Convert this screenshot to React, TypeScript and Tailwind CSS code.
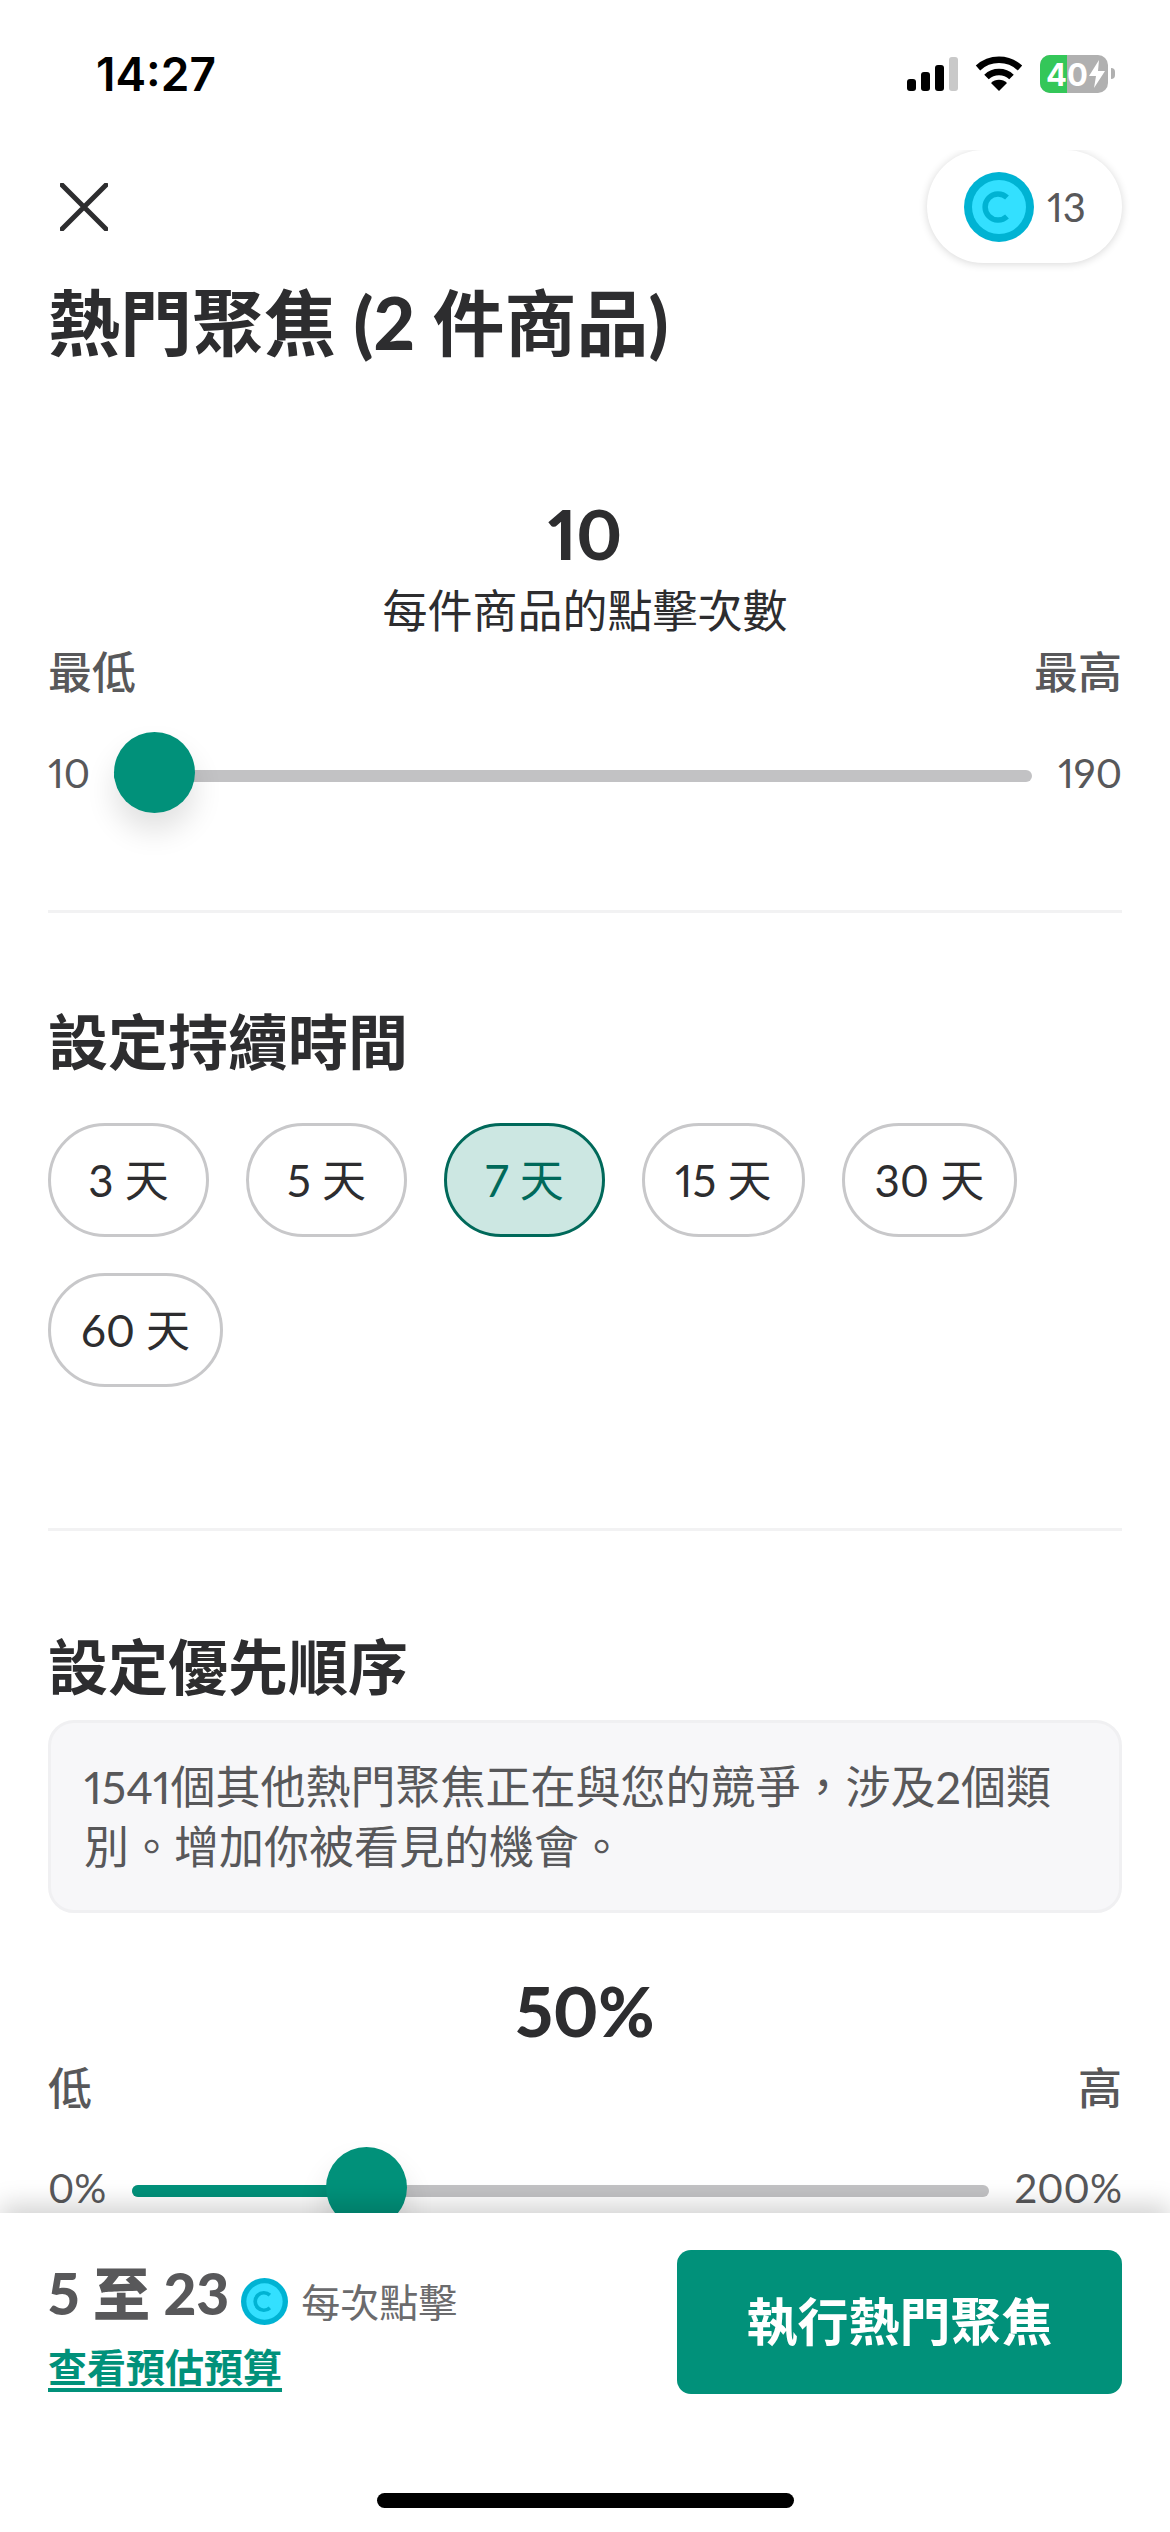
import React from 'react';

const durations = ['3 天', '5 天', '7 天', '15 天', '30 天', '60 天'];

const CoinIcon: React.FC<{ size: number }> = ({ size }) => (
  <svg width={size} height={size} viewBox="0 0 70 70" className="shrink-0">
    <circle cx="35" cy="35" r="35" fill="#00b3d3" />
    <circle cx="35" cy="35" r="27" fill="#33e0ff" />
    <path d="M43 25.5 A13 13 0 1 0 43 44.5" fill="none" stroke="#00b3d3" strokeWidth="5.5" />
  </svg>
);

const StatusBar: React.FC = () => (
  <div className="flex h-[150px] shrink-0 justify-between pl-[96px] pr-[55px] pt-[55px]">
    <span className="font-['Inter',sans-serif] text-[46px] leading-[38px] font-semibold text-black">14:27</span>
    <div className="flex h-[38px] items-start">
      {/* signal bars */}
      <div className="mt-[2px] flex h-[34px] items-end gap-[5px]">
        <div className="h-[12px] w-[9px] rounded-[3px] bg-black" />
        <div className="h-[19px] w-[9px] rounded-[3px] bg-black" />
        <div className="h-[26px] w-[9px] rounded-[3px] bg-black" />
        <div className="h-[34px] w-[9px] rounded-[3px] bg-[#c9c9c9]" />
      </div>
      {/* wifi */}
      <svg width="48" height="36" viewBox="0 0 48 36" className="ml-[17px]">
        <path d="M3 13 A31 31 0 0 1 45 13" fill="none" stroke="#000" strokeWidth="6.5" />
        <path d="M11.5 22 A18 18 0 0 1 36.5 22" fill="none" stroke="#000" strokeWidth="6.5" />
        <path d="M24 36 L16 28 A11.5 11.5 0 0 1 32 28 Z" fill="#000" />
      </svg>
      {/* battery, charging */}
      <div className="relative ml-[17px] flex h-[38px] w-[68px] items-center overflow-hidden rounded-[10px] bg-[#b0b0b0]">
        <div className="absolute inset-y-0 left-0 w-[27px] bg-[#34c759]" />
        <span className="relative pl-[6px] font-['Inter',sans-serif] text-[31px] leading-none font-bold text-white">40</span>
        <svg width="16" height="28" viewBox="0 0 16 28" className="relative ml-[1px]">
          <path d="M10 0 L0 16 H7 L5 28 L16 11 H9 Z" fill="#fff" />
        </svg>
      </div>
      <div className="ml-[3px] mt-[13px] h-[11px] w-[4px] rounded-r-full bg-[#b0b0b0]" />
    </div>
  </div>
);

type SliderProps = {
  min: string;
  max: string;
  // thumb position along the track, 0 to 1
  fraction: number;
  trackWidth: number;
  trackClass: string;
};

const Slider: React.FC<SliderProps> = ({ min, max, fraction, trackWidth, trackClass }) => {
  const thumbLeft = fraction * (trackWidth - 81);
  return (
    <div className="flex h-[81px] items-center justify-between text-[40px] text-[#58585a]">
      <span className="mb-[5px] leading-none">{min}</span>
      <div className={`relative h-[12px] rounded-full bg-[#c2c2c4] ${trackClass}`}>
        <div className="absolute inset-y-0 left-0 rounded-full bg-[#01917a]" style={{ width: thumbLeft + 40 }} />
        <div
          className="absolute top-[-38px] h-[81px] w-[81px] rounded-full bg-[#01917a] shadow-[0_18px_30px_rgba(0,0,0,0.12)]"
          style={{ left: thumbLeft }}
        />
      </div>
      <span className="mb-[5px] leading-none">{max}</span>
    </div>
  );
};

const App: React.FC = () => {
  return (
    <div className="flex h-[2532px] w-[1170px] flex-col overflow-hidden bg-white font-['Lato','Noto_Sans_CJK_TC',sans-serif] text-[#2d2d2f] proportional-nums">
      <StatusBar />

      <div className="min-h-0 flex-1 overflow-hidden px-[48px]">
        <div className="flex h-[113px] items-center justify-between">
          <button className="ml-[12px]">
            <svg width="48" height="48" viewBox="0 0 48 48" className="block">
              <path d="M2 2 L46 46 M46 2 L2 46" stroke="#2d2d2f" strokeWidth="5" strokeLinecap="round" />
            </svg>
          </button>
          <div className="flex h-[113px] w-[195px] items-center gap-[13px] rounded-full bg-white pl-[37px] shadow-[0_1px_8px_rgba(0,0,0,0.16)]">
            <CoinIcon size={70} />
            <span className="text-[40px] leading-none text-[#58585a]">13</span>
          </div>
        </div>

        <h1 className="mt-[14px] text-[72px] leading-[90px] font-bold">
          熱門聚焦 <span className="font-black">(2</span> 件商品<span className="font-black">)</span>
        </h1>

        <p className="mt-[127px] text-center text-[68px] leading-[80px] font-black">10</p>
        <p className="mt-[7px] text-center text-[45px] leading-[60px]">每件商品的點擊次數</p>
        <div className="mt-[6px] flex justify-between text-[44px] leading-[50px] font-medium text-[#58585a]">
          <span>最低</span>
          <span>最高</span>
        </div>
        <div className="mt-[38px]">
          <Slider min="10" max="190" fraction={0} trackWidth={918} trackClass="ml-[24px] mr-[26px] w-[918px]" />
        </div>

        <div className="mt-[94px] h-[3px] bg-[#f2f2f3]" />

        <h2 className="mt-[89px] text-[60px] leading-[80px] font-bold">設定持續時間</h2>
        <div className="mt-[41px] flex flex-wrap gap-x-[37px] gap-y-[36px]">
          {durations.map((label) => (
            <button
              key={label}
              className={`flex h-[114px] min-w-[161px] items-center justify-center rounded-full border-[3px] px-[30px] text-[44px] ${
                label === '7 天'
                  ? 'border-[#00695a] bg-[#cce7e2] text-[#00695a]'
                  : 'border-[#c8c8ca] bg-white text-[#2d2d2f]'
              }`}
            >
              {label}
            </button>
          ))}
        </div>

        <div className="mt-[141px] h-[3px] bg-[#f2f2f3]" />

        <h2 className="mt-[96px] text-[60px] leading-[80px] font-bold">設定優先順序</h2>
        <div className="mt-[13px] flex h-[193px] items-center rounded-[26px] border-[3px] border-[#f0f0f2] bg-[#f7f7f9] px-[33px] text-[45px] leading-[60px] text-[#58585a]">
          <p>1541個其他熱門聚焦正在與您的競爭，涉及2個類別。增加你被看見的機會。</p>
        </div>

        <p className="mt-[58px] text-center text-[68px] leading-[80px] font-black">50%</p>
        <div className="mt-[12px] flex justify-between text-[44px] leading-[50px] font-medium text-[#58585a]">
          <span>低</span>
          <span>高</span>
        </div>
        <div className="mt-[37px]">
          <Slider min="0%" max="200%" fraction={0.25} trackWidth={857} trackClass="w-[857px]" />
        </div>
      </div>

      <footer className="relative z-10 h-[319px] shrink-0 bg-white px-[48px] pt-[37px] shadow-[0_-8px_24px_rgba(0,0,0,0.18)]">
        <div className="flex h-[144px] justify-between">
          <div className="pt-[13px]">
            <div className="flex h-[60px] items-center text-[#58585a]">
              <span className="text-[57px] leading-none font-black">5 至 23</span>
              <span className="ml-[12px] mt-[16px]">
                <CoinIcon size={47} />
              </span>
              <span className="ml-[13px] mt-[18px] text-[39px] leading-none text-[#6b6b6d]">每次點擊</span>
            </div>
            <a className="mt-[18px] block text-[39px] leading-[52px] font-semibold text-[#01917a] underline decoration-[4px] underline-offset-[6px]">
              查看預估預算
            </a>
          </div>
          <button className="h-[144px] w-[445px] rounded-[14px] bg-[#01917a] text-[51px] font-bold text-white">
            執行熱門聚焦
          </button>
        </div>
        <div className="mx-auto mt-[99px] h-[15px] w-[417px] rounded-full bg-black" />
      </footer>
    </div>
  );
};

export default App;
